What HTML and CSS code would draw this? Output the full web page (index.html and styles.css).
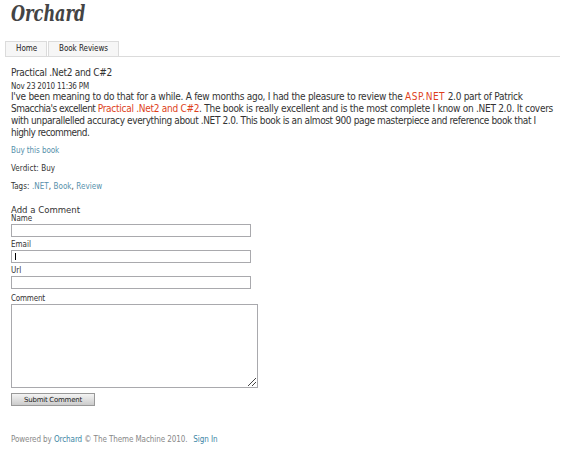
FILE: index.html
```html
<!DOCTYPE html>
<html lang="en">
<head>
<meta charset="utf-8">
<title>Orchard</title>
<link rel="stylesheet" href="styles.css">
</head>
<body>
<header class="brand">Orchard</header>
<nav class="menu"><a class="tab home">Home</a><a class="tab reviews">Book Reviews</a></nav>
<main class="content">
<h1 class="title">Practical .Net2 and C#2</h1>
<div class="date">Nov 23 2010 11:36 PM</div>
<div class="article">
<div class="line l1">I've been meaning to do that for a while. A few months ago, I had the pleasure to review the <a class="asp">ASP.NET</a> 2.0 part of Patrick</div>
<div class="line l2"><span class="author">Smacchia's excellent </span><a>Practical .Net2 and C#2</a>. The book is really excellent and is the most complete I know on .NET 2.0. It covers</div>
<div class="line l3">with unparallelled accuracy everything about .NET 2.0. This book is an almost 900 page masterpiece and reference book that I</div>
<div class="line l4">highly recommend.</div>
</div>
<p class="meta buy"><a>Buy this book</a></p>
<p class="meta verdict">Verdict: Buy</p>
<p class="meta tags">Tags: <a>.NET</a>, <a>Book</a>, <a>Review</a></p>
<form class="comment-form">
<h2 class="heading">Add a Comment</h2>
<label class="label">Name</label>
<div class="field"></div>
<label class="label">Email</label>
<div class="field"><span class="caret"></span></div>
<label class="label">Url</label>
<div class="field"></div>
<label class="label comment-label">Comment</label>
<div class="area"><svg class="grip" width="8" height="8" viewBox="0 0 8 8" shape-rendering="crispEdges"><path d="M0 7h1v1H0zM1 6h1v1H1zM2 5h1v1H2zM3 4h1v1H3zM4 3h1v1H4zM5 2h1v1H5zM6 1h1v1H6zM7 0h1v1H7zM4 7h1v1H4zM5 6h1v1H5zM6 5h1v1H6zM7 4h1v1H7z"/></svg></div>
<button class="submit" type="button">Submit Comment</button>
</form>
</main>
<footer class="footer"><span class="credit">Powered by <a>Orchard</a> © The Theme Machine 2010.</span><a class="signin">Sign In</a></footer>
</body>
</html>
```
FILE: styles.css
```css
* { box-sizing: border-box; }
body {
  margin: 0;
  height: 449px;
  overflow: hidden;
  background: #fff;
  color: #333;
  font: 8px/10px "DejaVu Sans Condensed", "DejaVu Sans", sans-serif;
  font-stretch: condensed;
  white-space: nowrap;
}
.brand {
  height: 41px;
  width: max-content;
  padding-left: 11px;
  font: italic bold 22px/27px "DejaVu Serif Condensed", "DejaVu Serif", serif;
  font-stretch: condensed;
  color: #444;
  transform: scaleX(.815);
  transform-origin: 11px 0;
}
.menu {
  display: flex;
  gap: 1px;
  height: 16px;
  margin: 0 7px 0 5px;
  border-bottom: 1px solid #dbdbdb;
}
.tab {
  height: 15px;
  padding: 2px 10px;
  border: 1px solid #dbdbdb;
  border-bottom: 0;
  background: #f6f6f6;
  color: #222;
}
.home { width: 42px; }
.reviews { width: 71px; letter-spacing: -.05px; }
.content { padding: 9px 7px 0 11px; }
.title {
  margin: 0;
  font-size: 10px;
  font-weight: normal;
  line-height: 14px;
  letter-spacing: -.3px;
}
.date { height: 9px; margin-top: 2px; letter-spacing: -.2px; }
.article { font-size: 10px; line-height: 12px; }
.line { height: 12px; white-space: pre; }
.l1 { letter-spacing: -.28px; }
.asp { letter-spacing: .5px; }
.l2 { letter-spacing: -.28px; }
.author { letter-spacing: -.5px; }
.l3 { letter-spacing: -.385px; }
.l4 { letter-spacing: -.52px; }
.article a { color: #dd3f1b; }
.meta { height: 10px; margin: 0; }
.buy { margin-top: 7px; letter-spacing: -.06px; }
.verdict, .tags { margin-top: 8px; letter-spacing: .06px; }
.meta a { color: #5690ab; }
.comment-form { margin-top: 13px; }
.heading {
  margin: 0;
  height: 9px;
  font-size: 9.5px;
  font-weight: normal;
  line-height: 10px;
}
.label { display: block; height: 10px; }
.field {
  width: 240px;
  height: 13px;
  margin-bottom: 3px;
  padding: 2px 3px;
  border: 1px solid #a9a9ad;
}
.caret { display: block; width: 1px; height: 7px; background: #000; }
.comment-label { margin-top: 5px; letter-spacing: -.2px; }
.area {
  display: flex;
  justify-content: flex-end;
  align-items: flex-end;
  width: 247px;
  height: 84px;
  padding: 1px;
  border: 1px solid #a9a9ad;
}
.grip { fill: #444; }
.submit {
  display: block;
  width: 84px;
  height: 13px;
  margin-top: 5px;
  padding: 0;
  border: 1px solid #999;
  background: linear-gradient(#f4f4f4, #cbcbcb);
  color: #222;
  font: 7px/10px "DejaVu Sans", sans-serif;
  letter-spacing: -.25px;
}
.footer {
  display: flex;
  gap: 6px;
  padding: 29px 0 0 11px;
  color: #888;
  letter-spacing: -.09px;
}
.footer a { color: #3d86a6; }
```
